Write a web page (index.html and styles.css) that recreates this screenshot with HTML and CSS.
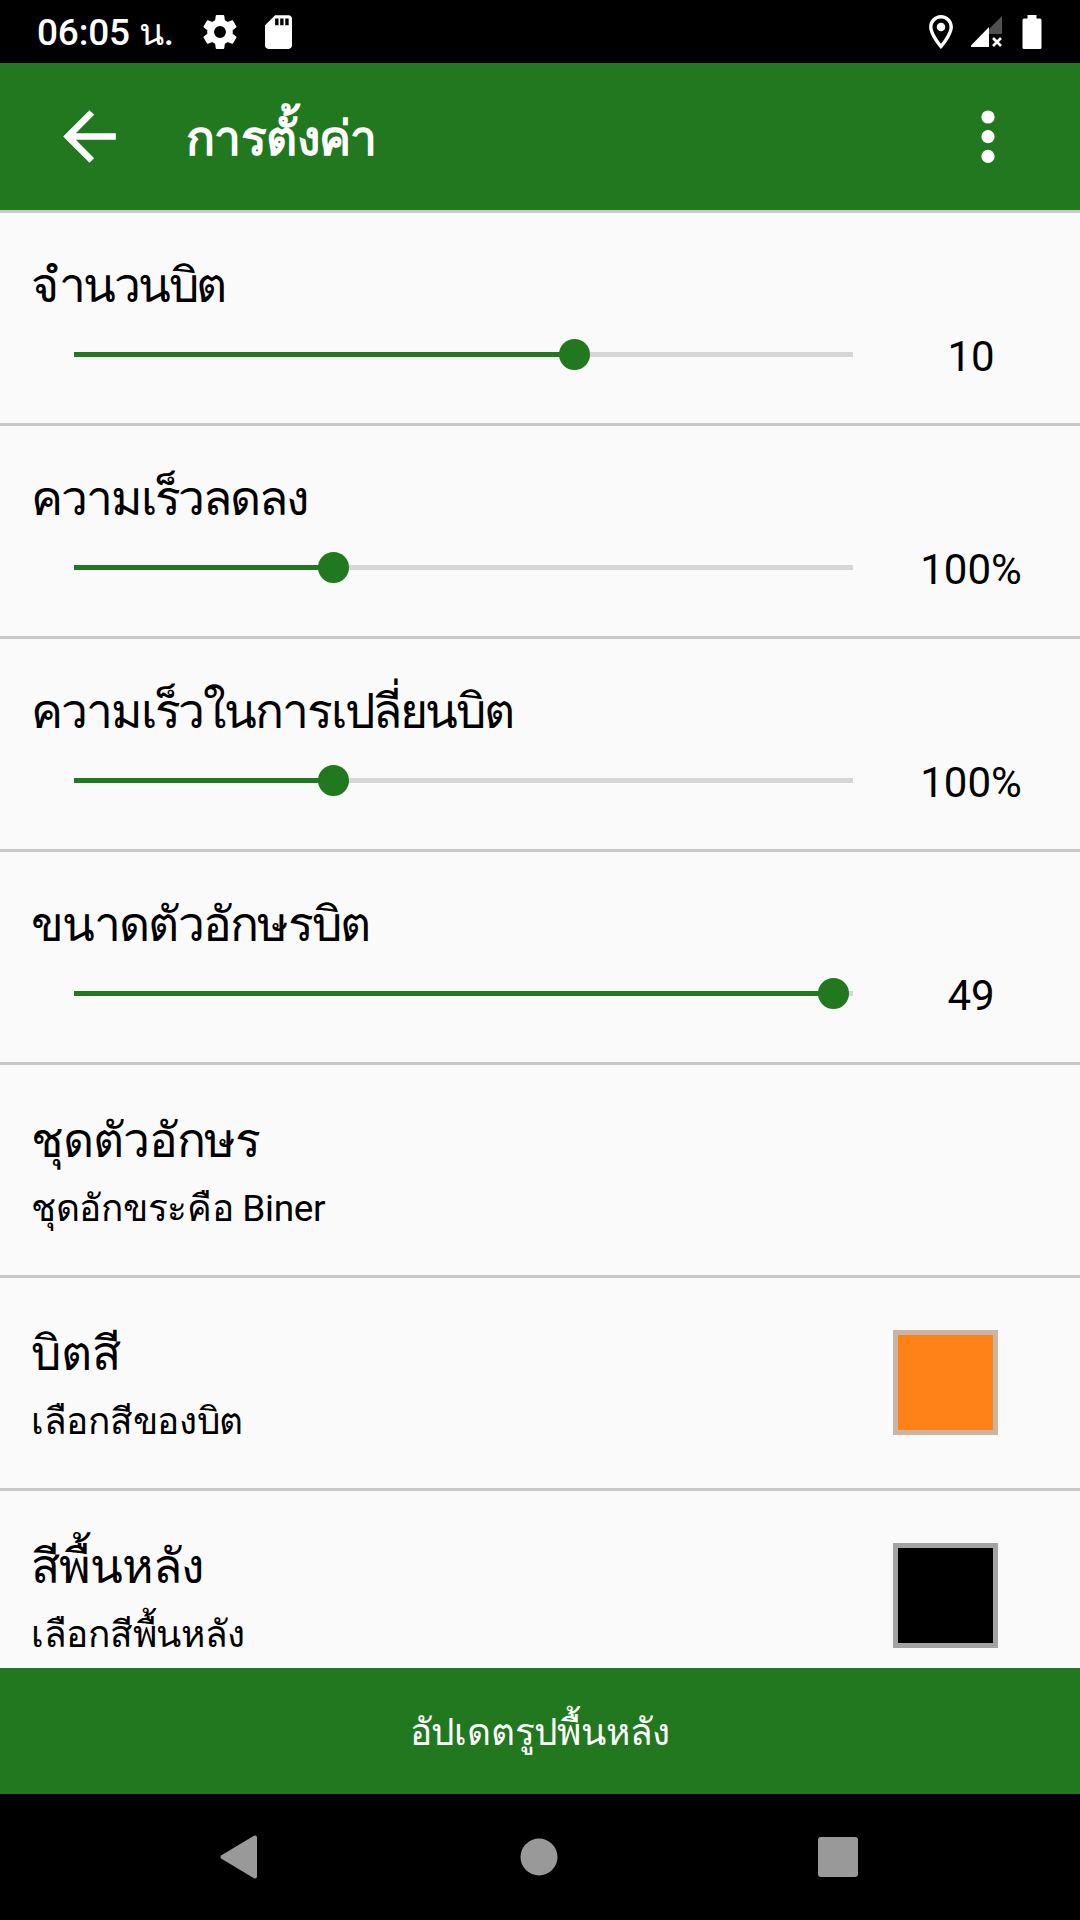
FILE: index.html
```html
<!DOCTYPE html>
<html lang="th">
  <head>
    <meta charset="UTF-8" />
    <meta name="viewport" content="width=device-width, initial-scale=1.0" />
    <title>การตั้งค่า</title>
    <link rel="stylesheet" href="styles.css">
  </head>
  <body>
    <div class="status-bar">
      <span class="time">06:05 น.</span>
      <svg class="gear" width="34" height="34" viewBox="2 2 20 20"><path d="M19.43 12.98c.04-.32.07-.64.07-.98s-.03-.66-.07-.98l2.11-1.65c.19-.15.24-.42.12-.64l-2-3.46c-.12-.22-.39-.3-.61-.22l-2.49 1c-.52-.4-1.08-.73-1.69-.98l-.38-2.65C14.46 2.18 14.25 2 14 2h-4c-.25 0-.46.18-.49.42l-.38 2.65c-.61.25-1.17.59-1.69.98l-2.49-1c-.23-.09-.49 0-.61.22l-2 3.46c-.13.22-.07.49.12.64l2.11 1.65c-.04.32-.07.65-.07.98s.03.66.07.98l-2.11 1.65c-.19.15-.24.42-.12.64l2 3.46c.12.22.39.3.61.22l2.49-1c.52.4 1.08.73 1.69.98l.38 2.65c.03.24.24.42.49.42h4c.25 0 .46-.18.49-.42l.38-2.65c.61-.25 1.17-.59 1.69-.98l2.49 1c.23.09.49 0 .61-.22l2-3.46c.12-.22.07-.49-.12-.64zM12 15.5a3.5 3.5 0 1 1 0-7 3.5 3.5 0 0 1 0 7z"/></svg>
      <svg class="sd" width="27" height="34" viewBox="4 2 16 20"><path d="M18 2h-8L4 8v12c0 1.100.9 2 2 2h12c1.100 0 2-.9 2-2V4c0-1.100-.9-2-2-2zm-6 6h-2V4h2zm3 0h-2V4h2zm3 0h-2V4h2z"/></svg>
      <svg class="pin" width="24" height="34" viewBox="5 2 14 20"><path d="M12 2C8.130 2 5 5.130 5 9c0 5.250 7 13 7 13s7-7.750 7-13c0-3.870-3.130-7-7-7zM7 9a5 5 0 0 1 10 0c0 2.880-2.880 7.190-5 9.880C9.920 16.210 7 11.850 7 9z"/><circle cx="12" cy="9" r="2.500"/></svg>
      <svg class="signal" width="32" height="32" viewBox="0 0 32 32">
        <path class="faded" d="M31 0v18H18V13z"/>
        <path d="M18 11v20H0v-1.500z"/>
        <path class="cross" d="M22 22l8 8M30 22l-8 8"/>
      </svg>
      <svg class="battery" width="20" height="34" viewBox="0 0 20 34"><path d="M5.500 0h9v3.500H18q1.500 0 1.500 1.500v27.500q0 1.500-1.500 1.500H2q-1.500 0-1.500-1.500V5q0-1.500 1.500-1.500h3.500z"/></svg>
    </div>

    <header class="app-bar">
      <svg class="back" width="79" height="79" viewBox="0 0 24 24"><path d="M20 11H7.830l5.590-5.590L12 4l-8 8 8 8 1.410-1.410L7.830 13H20v-2z"/></svg>
      <h1 class="title">การตั้งค่า</h1>
      <svg class="more" width="14" height="54" viewBox="0 0 14 54"><circle cx="7" cy="7" r="6.600"/><circle cx="7" cy="26.700" r="6.600"/><circle cx="7" cy="46.400" r="6.600"/></svg>
    </header>

    <main class="settings">
      <section class="row slider bits">
        <h2>จำนวนบิต</h2>
        <div class="control">
          <div class="track"><div class="fill" style="width: 64.29%"></div></div>
          <span class="value">10</span>
        </div>
      </section>
      <section class="row slider">
        <h2>ความเร็วลดลง</h2>
        <div class="control">
          <div class="track"><div class="fill" style="width: 33.33%"></div></div>
          <span class="value">100%</span>
        </div>
      </section>
      <section class="row slider">
        <h2>ความเร็วในการเปลี่ยนบิต</h2>
        <div class="control">
          <div class="track"><div class="fill" style="width: 33.33%"></div></div>
          <span class="value">100%</span>
        </div>
      </section>
      <section class="row slider text-size">
        <h2>ขนาดตัวอักษรบิต</h2>
        <div class="control">
          <div class="track"><div class="fill" style="width: 97.44%"></div></div>
          <span class="value">49</span>
        </div>
      </section>
      <section class="row option">
        <div>
          <h2>ชุดตัวอักษร</h2>
          <p>ชุดอักขระคือ Biner</p>
        </div>
      </section>
      <section class="row option bit-color">
        <div>
          <h2>บิตสี</h2>
          <p>เลือกสีของบิต</p>
        </div>
        <div class="swatch orange"></div>
      </section>
      <section class="row option">
        <div>
          <h2>สีพื้นหลัง</h2>
          <p>เลือกสีพื้นหลัง</p>
        </div>
        <div class="swatch black"></div>
      </section>
    </main>

    <button class="update-button">อัปเดตรูปพื้นหลัง</button>

    <nav class="nav-bar">
      <svg width="40" height="44" viewBox="0 0 40 44"><path d="M35 2.500v39L2.500 22z" stroke="#999" stroke-width="4" stroke-linejoin="round"/></svg>
      <svg width="38" height="38" viewBox="0 0 38 38"><circle cx="19" cy="19" r="18.500"/></svg>
      <svg width="40" height="40" viewBox="0 0 40 40"><rect width="40" height="40" rx="3"/></svg>
    </nav>
  </body>
</html>
```
FILE: styles.css
```css
* {
  box-sizing: border-box;
}

body {
  margin: 0;
  height: 1920px;
  display: flex;
  flex-direction: column;
  overflow: hidden;
  background: #fafafa;
  color: #000;
  font-family: Roboto, "Noto Sans", sans-serif;
}

h1,
h2,
p {
  margin: 0;
}

.status-bar {
  display: flex;
  align-items: center;
  flex: none;
  height: 63px;
  padding: 0 38px 0 37px;
  background: #000;
  color: #fff;
  fill: #fff;
}

.time {
  width: 166px;
  padding-top: 3px;
  font-size: 37px;
  font-weight: 500;
  letter-spacing: -0.2px;
  line-height: 60px;
  white-space: nowrap;
}

.sd {
  margin-left: 28px;
}

.pin {
  margin-left: auto;
}

.signal {
  margin-left: 18px;
}

.signal .faded {
  fill: #505050;
}

.signal .cross {
  fill: none;
  stroke: #fff;
  stroke-width: 2.6;
}

.battery {
  margin-left: 19px;
}

.app-bar {
  display: flex;
  align-items: center;
  flex: none;
  height: 147px;
  padding: 0 85px 0 50px;
  background: #21781e;
  color: #fff;
  fill: #fff;
}

.title {
  margin-left: 57px;
  padding-top: 4px;
  font-size: 48px;
  font-weight: bold;
  letter-spacing: -0.6px;
  line-height: 60px;
}

.more {
  margin-left: auto;
}

.settings {
  flex: 1;
  min-height: 0;
  overflow: hidden;
  border-top: 3px solid #c8c8c8;
}

.row {
  height: 213px;
  padding: 43px 82px 0 31px;
  border-bottom: 3px solid #c8c8c8;
}

.row h2 {
  font-size: 48px;
  font-weight: normal;
  letter-spacing: -1.1px;
  line-height: 60px;
}

.slider h2 {
  letter-spacing: -2.1px;
}

.bits h2 {
  letter-spacing: -2.6px;
}

.text-size h2 {
  letter-spacing: -1.7px;
}

.bit-color h2 {
  letter-spacing: 0;
}

.control {
  display: flex;
  align-items: center;
  height: 77px;
  padding-left: 43px;
}

.track {
  width: 779px;
  height: 5px;
  flex: none;
  background: #d6d6d6;
}

.fill {
  position: relative;
  height: 5px;
  background: #21781e;
}

/* slider thumb */
.fill::after {
  content: "";
  position: absolute;
  top: -13px;
  right: -15.5px;
  width: 31px;
  height: 31px;
  border-radius: 50%;
  background: #21781e;
}

.value {
  flex: none;
  width: 236px;
  padding-top: 4px;
  font-size: 42px;
  line-height: 50px;
  text-align: center;
}

.option {
  display: flex;
  justify-content: space-between;
  padding-top: 46px;
}

.option p {
  margin-top: 13px;
  font-size: 37px;
  letter-spacing: -0.3px;
  line-height: 50px;
}

.swatch {
  width: 105px;
  height: 105px;
  margin-top: 6px;
  border: 5px solid;
}

.orange {
  background: #ff8218;
  border-color: #cab5a2;
}

.black {
  background: #000;
  border-color: #a3a3a3;
}

.update-button {
  flex: none;
  height: 126px;
  padding: 3px 0 0;
  border: none;
  background: #21781e;
  color: #fff;
  font-family: inherit;
  font-size: 37px;
  letter-spacing: -0.2px;
  line-height: 50px;
}

.nav-bar {
  display: flex;
  align-items: center;
  justify-content: space-between;
  flex: none;
  height: 126px;
  padding: 0 222px 0 220px;
  background: #000;
  fill: #999;
}
```
